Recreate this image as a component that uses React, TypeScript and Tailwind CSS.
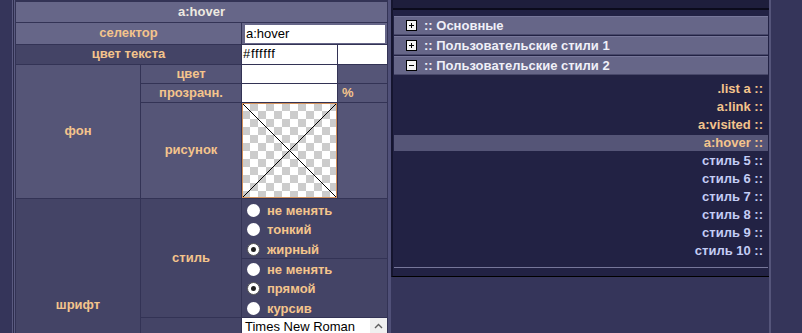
const label = "flex items-center justify-center text-[13px] font-bold text-[#f4c48c]";

function Radio({ checked, text }: { checked?: boolean; text: string }) {
  return (
    <div className="flex h-[19.5px] items-center">
      <span
        className={
          "ml-[5px] mr-[7px] flex h-[13px] w-[13px] items-center justify-center rounded-full bg-white " +
          (checked ? "border border-[#555]" : "")
        }
      >
        {checked && <span className="h-[5px] w-[5px] rounded-full bg-[#222]" />}
      </span>
      <span className="text-[13px] font-bold text-[#f4c48c]">{text}</span>
    </div>
  );
}

function Picture() {
  return (
    <svg width="95" height="95" className="block">
      <defs>
        <pattern id="checker" width="16" height="16" patternUnits="userSpaceOnUse">
          <rect width="16" height="16" fill="#fff" />
          <rect x="8" width="8" height="8" fill="#cccccc" />
          <rect y="8" width="8" height="8" fill="#cccccc" />
        </pattern>
      </defs>
      <rect width="95" height="95" fill="url(#checker)" />
      <path d="M1 1L94 94M94 1L1 94" stroke="#000" strokeWidth="1" />
      <rect x="0.5" y="0.5" width="94" height="94" fill="none" stroke="#d4925a" />
    </svg>
  );
}

function StyleEditor() {
  return (
    <div className="flex w-[373px] shrink-0 flex-col bg-[#333355]">
      <div className="mx-px mt-[2px] flex h-[20px] items-center justify-center bg-[#666688] text-[13px] font-bold text-[#eeeae0]">
        a:hover
      </div>
      <div className="h-px" />
      <div className="h-px bg-[#4c4c70]" />
      <div className="grid grid-cols-[124px_100px_95px_49px] grid-rows-[21px_19px_18px_18px_95px_59px_58px_94px] gap-px p-px">
        <div className={label + " col-start-1 col-end-3 row-start-1 bg-[#666688]"}>селектор</div>
        <div className="col-start-3 col-end-5 row-start-1 bg-[#666688] pl-[3px] pr-[2px] pt-[2px] pb-px">
          <div className="flex h-full items-center bg-white pl-px text-[13px] text-black">a:hover</div>
        </div>

        <div className={label + " col-start-1 col-end-3 row-start-2 bg-[#444466]"}>цвет текста</div>
        <div className="col-start-3 row-start-2 flex items-center bg-white pl-px text-[13px] tracking-[0.7px] text-black">
          #ffffff
        </div>
        <div className="col-start-4 row-start-2 bg-white" />

        <div className={label + " col-start-1 row-start-3 row-end-6 bg-[#555577]"}>фон</div>
        <div className={label + " col-start-2 row-start-3 bg-[#555577]"}>цвет</div>
        <div className="col-start-3 row-start-3 bg-white" />
        <div className="col-start-4 row-start-3 bg-[#555577]" />
        <div className={label + " col-start-2 row-start-4 bg-[#555577]"}>прозрачн.</div>
        <div className="col-start-3 row-start-4 bg-white" />
        <div className="col-start-4 row-start-4 flex items-center bg-[#555577] pl-[4px] text-[13px] font-bold text-[#f4c48c]">
          %
        </div>
        <div className={label + " col-start-2 row-start-5 bg-[#555577]"}>рисунок</div>
        <div className="col-start-3 row-start-5 bg-[#555577]">
          <Picture />
        </div>
        <div className="col-start-4 row-start-5 bg-[#555577]" />

        <div className={label + " col-start-1 row-start-6 row-end-9 bg-[#444466]"}>шрифт</div>
        <div className={label + " col-start-2 row-start-6 row-end-8 bg-[#444466]"}>стиль</div>
        <div className="col-start-3 col-end-5 row-start-6 overflow-hidden bg-[#444466] pt-[2px]">
          <Radio text="не менять" />
          <Radio text="тонкий" />
          <Radio text="жирный" checked />
        </div>
        <div className="col-start-3 col-end-5 row-start-7 overflow-hidden bg-[#444466] pt-px">
          <Radio text="не менять" />
          <Radio text="прямой" checked />
          <Radio text="курсив" />
        </div>
        <div className="col-start-2 row-start-8 bg-[#444466]" />
        <div className="col-start-3 col-end-5 row-start-8 flex bg-white">
          <div className="flex-1 pl-[3px] pt-[1px] text-[13px] leading-[16px] text-black">Times New Roman</div>
          <div className="flex h-[17px] w-[17px] items-center justify-center bg-[#f0f0f0]">
            <svg width="9" height="6" viewBox="0 0 9 6">
              <path d="M1 5L4.5 1.5L8 5" fill="none" stroke="#606060" strokeWidth="1.4" />
            </svg>
          </div>
        </div>
      </div>
    </div>
  );
}

function ToggleBox({ open }: { open?: boolean }) {
  return (
    <svg width="11" height="11" className="block shrink-0">
      <rect x="0.5" y="0.5" width="10" height="10" fill="#f4f4f4" stroke="#000" />
      <path d={open ? "M3 5.5h5" : "M3 5.5h5M5.5 3v5"} stroke="#000" />
    </svg>
  );
}

const groups = [
  { name: ":: Основные", open: false },
  { name: ":: Пользовательские стили 1", open: false },
  { name: ":: Пользовательские стили 2", open: true },
];

const rules = [
  { name: ".list a ::", warm: true },
  { name: "a:link ::", warm: true },
  { name: "a:visited ::", warm: true },
  { name: "a:hover ::", warm: true, active: true },
  { name: "стиль 5 ::" },
  { name: "стиль 6 ::" },
  { name: "стиль 7 ::" },
  { name: "стиль 8 ::" },
  { name: "стиль 9 ::" },
  { name: "стиль 10 ::" },
];

function RulesPanel() {
  return (
    <div className="flex w-[378px] shrink-0 flex-col self-start border-b border-l-2 border-b-black border-l-[#15152f] bg-[#222244]">
      <div className="h-[8px] bg-[#1e1e3c]" />
      <div className="h-[2px] bg-[#0b0b1c]" />
      <div className="h-[6px]" />
      {groups.map((g, i) => (
        <div
          key={g.name}
          className={
            "mx-px flex h-[19px] items-center gap-[7px] border-t border-b border-t-[#77779a] border-b-[#48486a] bg-[#666688] pl-[12px] " +
            (i > 0 ? "mt-px" : "")
          }
        >
          <ToggleBox open={g.open} />
          <span className="text-[13px] font-bold text-[#f0f0f8]">{g.name}</span>
        </div>
      ))}
      <div className="mt-[5px]">
        {rules.map((r) => (
          <div key={r.name} className="h-[18px] py-px">
            <div
              className={
                "mx-px flex h-full items-center justify-end pr-[5px] text-[13px] font-bold " +
                (r.active ? "bg-[#555577] " : "") +
                (r.warm ? "text-[#f4c48c]" : "text-[#c4cdf5]")
              }
            >
              {r.name}
            </div>
          </div>
        ))}
      </div>
      <div className="h-[7px]" />
      <div className="mx-px h-px bg-[#77779a]" />
      <div className="h-[8px]" />
    </div>
  );
}

export default function App() {
  return (
    <div className="flex h-[333px] w-[802px] overflow-hidden bg-[#35355a] font-['Liberation_Sans',Arial,sans-serif]">
      <div className="w-[12px] shrink-0" />
      <div className="w-px shrink-0 bg-[#5a5a80]" />
      <div className="w-px shrink-0 bg-[#2c2c4c]" />
      <div className="w-px shrink-0 bg-[#5a5a80]" />
      <StyleEditor />
      <div className="w-[3px] shrink-0 bg-[#505078]" />
      <RulesPanel />
      <div className="w-[2px] shrink-0 bg-[#55557a]" />
    </div>
  );
}
